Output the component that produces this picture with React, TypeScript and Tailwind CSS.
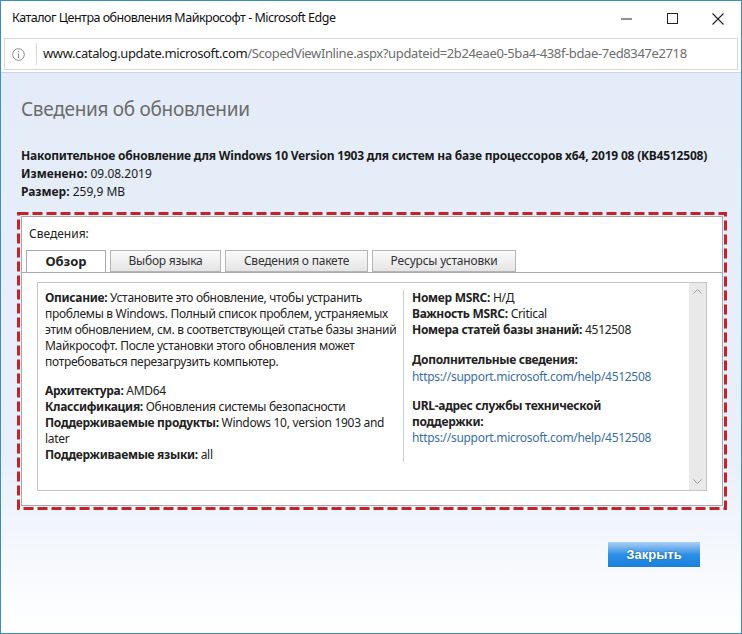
import React from "react";

const body = { fontFamily: '"Noto Sans", "Open Sans", sans-serif' } as const;

function Tab({ label, active, w }: { label: string; active?: boolean; w: string }) {
  return (
    <div
      className={
        active
          ? `${w} h-[23px] -mb-px flex items-center justify-center border border-[#a9a9a9] border-b-white bg-white text-[13px] font-bold text-[#222]`
          : `${w} h-[22px] mt-[1px] flex items-center justify-center border border-[#b5b5b5] bg-gradient-to-b from-[#fbfbfb] to-[#e4e4e4] text-[12px] tracking-[-0.2px] text-[#333]`
      }
    >
      {label}
    </div>
  );
}

function Row({ k, v }: { k: string; v?: string }) {
  return (
    <div>
      <span className="font-bold">{k}</span>
      {v !== undefined ? <span> {v}</span> : null}
    </div>
  );
}

export default function App() {
  return (
    <div
      className="w-[742px] h-[634px] flex flex-col overflow-hidden border border-[#3b8fbd] bg-white text-[#222]"
      style={body}
    >
      {/* Title bar */}
      <div className="h-[35px] flex items-center pl-[11px] shrink-0">
        <div className="flex-1 text-[12.5px] tracking-[-0.5px] text-[#111]">
          Каталог Центра обновления Майкрософт - Microsoft Edge
        </div>
        <div className="flex items-center h-full">
          <div className="w-[46px] flex justify-center">
            <svg width="11" height="11" viewBox="0 0 11 11">
              <line x1="0" y1="6" x2="11" y2="6" stroke="#222" strokeWidth="1" />
            </svg>
          </div>
          <div className="w-[46px] flex justify-center">
            <svg width="11" height="11" viewBox="0 0 11 11">
              <rect x="0.5" y="0.5" width="10" height="10" fill="none" stroke="#222" strokeWidth="1" />
            </svg>
          </div>
          <div className="w-[46px] flex justify-center">
            <svg width="12" height="12" viewBox="0 0 12 12">
              <path d="M0.5 0.5 L11.5 11.5 M11.5 0.5 L0.5 11.5" stroke="#222" strokeWidth="1.1" />
            </svg>
          </div>
        </div>
      </div>
      {/* Address bar */}
      <div className="h-[37px] px-[3px] pt-[2px] pb-[2px] shrink-0 border-b border-[#cfd6de]">
        <div className="h-full flex items-center border border-[#d9d9d9] bg-white">
          <div className="w-[25px] flex justify-center pl-[2px]">
            <svg width="13" height="13" viewBox="0 0 13 13">
              <circle cx="6.5" cy="6.5" r="5.8" fill="none" stroke="#8a8a8a" strokeWidth="1" />
              <line x1="6.5" y1="5.5" x2="6.5" y2="10" stroke="#8a8a8a" strokeWidth="1.1" />
              <circle cx="6.5" cy="3.6" r="0.7" fill="#8a8a8a" />
            </svg>
          </div>
          <div className="w-px h-[22px] bg-[#d7d7d7] mx-[6px]" />
          <div className="text-[13px] tracking-[-0.38px] whitespace-nowrap">
            <span className="text-[#1a1a1a]">www.catalog.update.microsoft.com</span>
            <span className="text-[#6d6d6d]">/ScopedViewInline.aspx?updateid=2b24eae0-5ba4-438f-bdae-7ed8347e2718</span>
          </div>
        </div>
      </div>
      {/* Page */}
      <div className="flex-1 flex flex-col px-[16px] bg-gradient-to-b from-[#e3ecf8] via-[#eaf0fa] via-70% to-[#ffffff]">
        <div className="pt-[24px] pl-[4px] text-[19px] tracking-[-0.3px] text-[#6b6b6b] leading-[24px]">
          Сведения об обновлении
        </div>
        <div className="pt-[26px] pl-[4px] text-[12px] leading-[18px] text-[#1a1a1a]">
          <div className="font-bold tracking-[-0.2px] whitespace-nowrap">
            Накопительное обновление для Windows 10 Version 1903 для систем на базе процессоров x64, 2019 08 (KB4512508)
          </div>
          <Row k="Изменено:" v="09.08.2019" />
          <Row k="Размер:" v="259,9 MB" />
        </div>
        {/* Highlighted box */}
        <div className="relative mt-[11px] w-[710px] h-[298px] p-[4px]">
          <svg className="absolute inset-0 pointer-events-none" width="710" height="298">
            <rect
              x="1.5"
              y="1.5"
              width="707"
              height="295"
              fill="none"
              stroke="#c4232b"
              strokeWidth="3"
              strokeDasharray="10 4"
            />
          </svg>
          <div className="h-full bg-white border border-[#a8a8a8] flex flex-col">
            <div className="pl-[7px] pt-[9px] text-[12px] leading-[16px] text-[#222]">Сведения:</div>
            <div className="mt-[7px] pl-[4px] flex items-end gap-[4px]">
              <Tab label="Обзор" active w="w-[80px]" />
              <Tab label="Выбор языка" w="w-[111px]" />
              <Tab label="Сведения о пакете" w="w-[143px]" />
              <Tab label="Ресурсы установки" w="w-[144px]" />
            </div>
            <div className="flex-1 border-t border-[#a9a9a9] px-[15px] pt-[9px]">
              <div className="h-[209px] border border-[#c6c6c6] flex">
                <div className="flex-1 flex pt-[7px] pl-[7px] text-[12px] leading-[16px] tracking-[-0.3px] text-[#222]">
                  <div className="w-[358px] pr-[4px]">
                    <p>
                      <span className="font-bold">Описание:</span> Установите это обновление, чтобы устранить
                      проблемы в Windows. Полный список проблем, устраняемых этим обновлением, см. в
                      соответствующей статье базы знаний Майкрософт. После установки этого обновления может
                      потребоваться перезагрузить компьютер.
                    </p>
                    <div className="mt-[13px]">
                      <Row k="Архитектура:" v="AMD64" />
                      <Row k="Классификация:" v="Обновления системы безопасности" />
                      <Row k="Поддерживаемые продукты:" v="Windows 10, version 1903 and later" />
                      <Row k="Поддерживаемые языки:" v="all" />
                    </div>
                  </div>
                  <div className="w-px h-[172px] bg-[#cfcfcf]" />
                  <div className="pl-[8px] w-[270px]">
                    <Row k="Номер MSRC:" v="Н/Д" />
                    <Row k="Важность MSRC:" v="Critical" />
                    <Row k="Номера статей базы знаний:" v="4512508" />
                    <div className="mt-[13px] leading-[17px] font-bold">Дополнительные сведения:</div>
                    <div className="text-[#3b6fa3] leading-[17px]">https://support.microsoft.com/help/4512508</div>
                    <div className="mt-[13px] font-bold w-[200px]">URL-адрес службы технической поддержки:</div>
                    <div className="text-[#3b6fa3]">https://support.microsoft.com/help/4512508</div>
                  </div>
                </div>
                <div className="w-[17px] bg-[#e9e9e9] flex flex-col justify-between items-center py-[6px]">
                  <svg width="9" height="5" viewBox="0 0 9 5">
                    <path d="M0.5 4.5 L4.5 0.5 L8.5 4.5" fill="none" stroke="#a0a0a0" strokeWidth="1" />
                  </svg>
                  <svg width="9" height="5" viewBox="0 0 9 5">
                    <path d="M0.5 0.5 L4.5 4.5 L8.5 0.5" fill="none" stroke="#a0a0a0" strokeWidth="1" />
                  </svg>
                </div>
              </div>
            </div>
          </div>
        </div>
        <div className="flex justify-end pr-[25px] mt-[32px]">
          <button
            className="w-[92px] h-[25px] bg-gradient-to-b from-[#a9cff3] via-[#2a8fe6] via-50% to-[#1c7fdc] text-white text-[13px] font-bold [text-shadow:0_0_2px_#1a5fa0]"
            style={{ fontFamily: '"Liberation Sans", Arial, sans-serif' }}
          >
            Закрыть
          </button>
        </div>
      </div>
    </div>
  );
}
